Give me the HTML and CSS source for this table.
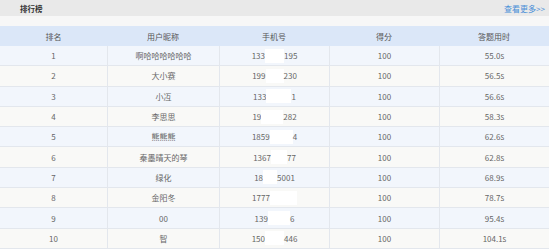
FILE: index.html
```html
<!DOCTYPE html>
<html lang="zh">
<head>
<meta charset="utf-8">
<title>排行榜</title>
<link rel="stylesheet" href="styles.css">
</head>
<body>
<div class="panel">
  <div class="topbar">
    <span class="title">排行榜</span>
    <a class="more" href="#">查看更多&gt;&gt;</a>
  </div>
  <div class="spacer"></div>
  <div class="table">
    <div class="row head">
      <div class="cell">排名</div><div class="cell">用户昵称</div><div class="cell">手机号</div><div class="cell">得分</div><div class="cell">答题用时</div>
    </div>
    <div class="row odd">
      <div class="cell">1</div><div class="cell">啊哈哈哈哈哈哈</div><div class="cell phone">133<span class="mask" style="width:19px"></span>195</div><div class="cell">100</div><div class="cell">55.0s</div>
    </div>
    <div class="row even">
      <div class="cell">2</div><div class="cell">大小赛</div><div class="cell phone">199<span class="mask" style="width:18px"></span>230</div><div class="cell">100</div><div class="cell">56.5s</div>
    </div>
    <div class="row odd">
      <div class="cell">3</div><div class="cell">小冱</div><div class="cell phone">133<span class="mask" style="width:25px"></span>1</div><div class="cell">100</div><div class="cell">56.6s</div>
    </div>
    <div class="row even">
      <div class="cell">4</div><div class="cell">李思思</div><div class="cell phone">19<span class="mask" style="width:22px"></span>282</div><div class="cell">100</div><div class="cell">58.3s</div>
    </div>
    <div class="row odd">
      <div class="cell">5</div><div class="cell">熊熊熊</div><div class="cell phone">1859<span class="mask" style="width:23px"></span>4</div><div class="cell">100</div><div class="cell">62.6s</div>
    </div>
    <div class="row even">
      <div class="cell">6</div><div class="cell">秦墨晴天的琴</div><div class="cell phone">1367<span class="mask" style="width:16px"></span>77</div><div class="cell">100</div><div class="cell">62.8s</div>
    </div>
    <div class="row odd">
      <div class="cell">7</div><div class="cell">绿化</div><div class="cell phone">18<span class="mask" style="width:14px"></span>5001</div><div class="cell">100</div><div class="cell">68.9s</div>
    </div>
    <div class="row even">
      <div class="cell">8</div><div class="cell">金阳冬</div><div class="cell phone">1777<span class="mask" style="width:27px"></span></div><div class="cell">100</div><div class="cell">78.7s</div>
    </div>
    <div class="row odd">
      <div class="cell">9</div><div class="cell">00</div><div class="cell phone">139<span class="mask" style="width:22px"></span>6</div><div class="cell">100</div><div class="cell">95.4s</div>
    </div>
    <div class="row even">
      <div class="cell">10</div><div class="cell">智</div><div class="cell phone">150<span class="mask" style="width:19px"></span>446</div><div class="cell">100</div><div class="cell">104.1s</div>
    </div>
  </div>
</div>
</body>
</html>
```
FILE: styles.css
```css
html, body {
  margin: 0;
  padding: 0;
  background: #ffffff;
}
body {
  font-family: "Noto Sans CJK SC", "Noto Sans", sans-serif;
  font-size: 8px;
  color: #666;
}
.panel {
  width: 549px;
}
.topbar {
  height: 16px;
  background: #e9e9e9;
  display: flex;
  align-items: center;
  justify-content: space-between;
  padding: 0 4px 0 20px;
  box-sizing: border-box;
}
.title {
  color: #333;
  font-weight: bold;
  font-size: 7.5px;
}
.more {
  color: #4a8fd8;
  text-decoration: none;
  font-size: 8px;
}
.spacer {
  height: 10px;
  background: #f7f7f7;
}
.table {
  display: flex;
  flex-direction: column;
}
.row {
  display: grid;
  grid-template-columns: 107px 112px 110px 110px 110px;
  height: 20.3px;
  box-sizing: border-box;
  border-bottom: 1px solid #e3e7ed;
}
.row.head {
  height: 20px;
  background: #dbe7f8;
  color: #555;
  border-bottom: none;
}
.row.odd {
  background: #f2f6fc;
}
.row.even {
  background: #f9f9f7;
}
.cell {
  display: flex;
  align-items: center;
  justify-content: center;
  white-space: nowrap;
}
.row.odd .cell + .cell,
.row.even .cell + .cell {
  border-left: 1px solid #e3e7ed;
}
.mask {
  display: inline-block;
  height: 14px;
  background: #ffffff;
}
```
